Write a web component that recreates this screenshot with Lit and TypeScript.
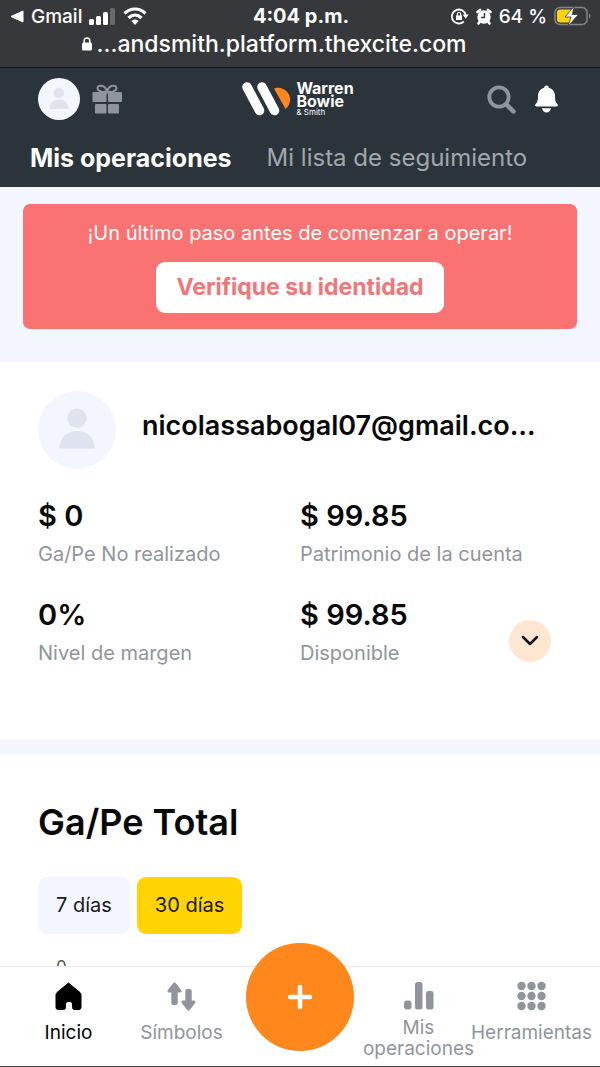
import { LitElement, html, css, svg } from "lit";
import { customElement, state } from "lit/decorators.js";

const person = svg`<circle cx="20" cy="14" r="5"/><path d="M11 29.500c0-5.500 3.500-9 9-9s9 3.500 9 9z"/>`;

@customElement("status-bar")
class StatusBar extends LitElement {
  static styles = css`
    :host { display: block; background: #37383c; color: #fff; border-bottom: 1px solid #101417; font-weight: 600; }
    .row { display: grid; grid-template-columns: 1fr auto 1fr; align-items: center; height: 32px; padding: 0 8px 0 10px; font-size: 19px; }
    .side { display: flex; align-items: center; gap: 7px; font-weight: 500; white-space: nowrap; }
    .end { justify-content: flex-end; }
    .clock { font-size: 20px; font-weight: 700; }
    .url { display: flex; align-items: center; justify-content: center; gap: 5px; height: 24px; padding: 0 52px 11px 0; font-size: 23px; font-weight: 500; line-height: 24px; }
    svg { display: block; flex: none; }
  `;
  render() {
    return html`
      <div class="row">
        <div class="side">
          <svg width="14" height="13" viewBox="0 0 14 13"><path d="M13 1v11L1 6.500z" fill="#fff" stroke="#fff" stroke-linejoin="round"/></svg>
          <span>Gmail</span>
          <svg width="27" height="17" viewBox="0 0 27 17" fill="#fff"><rect x="0" y="11" width="5" height="6" rx="1.500"/><rect x="7" y="8" width="5" height="9" rx="1.500"/><rect x="14" y="4" width="5" height="13" rx="1.500"/><rect x="21" y="0" width="5" height="17" rx="1.500" opacity=".25"/></svg>
          <svg width="24" height="18" viewBox="0 0 24 18" fill="none" stroke="#fff" stroke-width="3.200"><path d="M1.500 6.500c6-6 15-6 21 0M5.500 11c4-3.800 9-3.800 13 0"/><path d="M8.300 14c2.200-2.100 5.200-2.100 7.400 0L12 18z" fill="#fff" stroke="none"/></svg>
        </div>
        <div class="clock">4:04 p.m.</div>
        <div class="side end">
          <svg width="18" height="17" viewBox="0 0 18 17" fill="none" stroke="#fff" stroke-width="1.800"><path d="M12.800 13.500A7 7 0 1 1 14.700 7"/><path d="M11.700 6.500h6l-3 4.200z" fill="#fff" stroke="none"/><rect x="5" y="7.500" width="6" height="4.500" fill="#fff" stroke="none"/><path d="M6.300 8V6.200a1.700 1.700 0 0 1 3.400 0V8" stroke-width="1.200"/></svg>
          <svg width="16" height="17" viewBox="0 0 16 17"><circle cx="8" cy="9" r="6.700" fill="#fff"/><path d="M1.500 4 4 2M14.500 4 12 2M3.500 14l-1 1.500M12.500 14l1 1.500" stroke="#fff" stroke-width="2.600" stroke-linecap="round"/><path d="M8.500 5v4.500H5" fill="none" stroke="#37383c" stroke-width="1.400"/></svg>
          <span>64 %</span>
          <svg width="38" height="20" viewBox="0 0 38 20"><rect x="1" y="1.500" width="32" height="17" rx="5" fill="none" stroke="#85868a" stroke-width="1.500"/><rect x="3" y="3.500" width="16" height="13" rx="3" fill="#fcd20c"/><path d="M35 7.500c2 .7 2 4.300 0 5z" fill="#85868a"/><path d="M20.500 0 11 11h6l-3 9 10.500-11.500H18z" fill="#fff" stroke="#37383c" stroke-width=".8"/></svg>
        </div>
      </div>
      <div class="url">
        <svg width="10" height="14" viewBox="0 0 10 14"><rect y="5.500" width="10" height="8" rx="1.500" fill="#fff"/><path d="M2.200 6V3.700a2.800 2.800 0 0 1 5.600 0V6" fill="none" stroke="#fff" stroke-width="1.500"/></svg>
        <span>...andsmith.platform.thexcite.com</span>
      </div>`;
  }
}

@customElement("app-header")
class AppHeader extends LitElement {
  static styles = css`
    :host { display: block; background: #2a343a; color: #fff; }
    .top { display: grid; grid-template-columns: 1fr auto 1fr; align-items: center; padding: 9px 42px 0 38px; height: 44px; }
    .group { display: flex; align-items: center; gap: 12px; }
    .end { justify-content: flex-end; gap: 19px; }
    button { background: none; border: 0; padding: 0; cursor: pointer; }
    svg { display: block; }
    .logo { display: flex; align-items: center; gap: 5px; color: #fff; text-decoration: none; }
    .name { display: flex; flex-direction: column; font-size: 16px; line-height: 13px; font-weight: 700; }
    .name small { font-size: 8px; line-height: 9px; font-weight: 400; }
    .tabs { display: flex; align-items: center; gap: 35px; padding: 8px 30px 0; height: 58px; }
    .tabs a { color: #a2a7ad; font-size: 24px; line-height: 32px; text-decoration: none; white-space: nowrap; }
    .tabs a.active { color: #fff; font-size: 25px; font-weight: 700; }
  `;
  render() {
    return html`
      <div class="top">
        <div class="group">
          <button aria-label="Perfil"><svg width="42" height="42" viewBox="0 0 40 40"><circle cx="20" cy="20" r="20" fill="#f3f6ff"/><g fill="#e0e3ee">${person}</g></svg></button>
          <button aria-label="Regalos"><svg width="30" height="30" viewBox="0 0 30 30" fill="#90959b"><rect x=".5" y="8" width="14" height="10" rx="1"/><rect x="16" y="8" width="14" height="10" rx="1"/><rect x="3" y="20" width="11.500" height="9.500" rx="1"/><rect x="16" y="20" width="11" height="9.500" rx="1"/><path d="M14.500 7.500C11 9 5.500 7 5.500 4.300 5.500.5 13 .5 15 7.500 17 .5 24.500.5 24.500 4.300 24.500 7 19 9 15.500 7.500" fill="none" stroke="#90959b" stroke-width="2"/></svg></button>
        </div>
        <a class="logo" href="#">
          <svg width="49" height="34" viewBox="0 0 49 34"><path d="M32 6.500c5-1.800 11 .3 14 4.500 3.600 5.200 2.500 12-2.500 16z" fill="#ff871c"/><path d="m5 5 12.500 23.500M20 5l12.500 23.500" stroke="#fff" stroke-width="9.500" stroke-linecap="round"/></svg>
          <span class="name"><span>Warren<br>Bowie</span><small>&amp; Smith</small></span>
        </a>
        <div class="group end">
          <button aria-label="Buscar"><svg width="29" height="29" viewBox="0 0 29 29" fill="none" stroke="#90959b"><circle cx="12" cy="12" r="9.700" stroke-width="3.800"/><path d="m19.500 19.500 7 7" stroke-width="4.500" stroke-linecap="round"/></svg></button>
          <button aria-label="Notificaciones"><svg width="23" height="28" viewBox="0 0 23 28" fill="#fff"><path d="M11.500.500c1.300 0 2.200.9 2.300 2.200 4 1.100 6.200 4.200 6.200 8.300 0 4.800.8 6.500 2.500 8.300.9 1 .3 2.200-.9 2.200H1.400c-1.200 0-1.800-1.200-.9-2.200C2.200 17.500 3 15.800 3 11c0-4.100 2.200-7.200 6.200-8.300.1-1.300 1-2.200 2.300-2.200zM7 23.300h9c-.4 2.600-2.200 4.200-4.500 4.200S7.400 25.900 7 23.300z"/></svg></button>
        </div>
      </div>
      <nav class="tabs"><a class="active" href="#">Mis operaciones</a><a href="#">Mi lista de seguimiento</a></nav>`;
  }
}

@customElement("bottom-nav")
class BottomNav extends LitElement {
  static styles = css`
    :host { display: block; background: #fff; border-top: 1px solid #e8e9eb; border-bottom: 1px solid #4a4b4e; }
    nav { display: grid; grid-template-columns: minmax(0, 1fr) minmax(0, 1fr) 124px minmax(0, 1fr) minmax(0, 1fr); height: 99px; padding: 0 12px; }
    a { display: flex; flex-direction: column; align-items: center; gap: 6px; padding-top: 14px; color: #90959b; text-decoration: none; font-size: 19px; }
    a.active { color: #000; }
    .label { display: flex; align-items: center; min-height: 30px; line-height: 21px; text-align: center; }
    svg { display: block; flex: none; }
    .slot { position: relative; }
    .add { position: absolute; left: 50%; top: -24px; width: 108px; height: 108px; margin-left: -54px; padding: 0; border: 0; border-radius: 50%; background: #ff871c; display: grid; place-items: center; cursor: pointer; }
  `;
  render() {
    return html`<nav>
      <a class="active" href="#"><svg width="30" height="30" viewBox="0 0 30 30"><path d="M14.500 2 26 11.500q1 1 1 2.500v12.500q0 2-2 2h-4.500q-2 0-2-2V23c0-3.500-7-3.500-7 0v3.500q0 2-2 2H4q-2 0-2-2V14q0-1.500 1-2.500z" stroke="#000" stroke-linejoin="round"/></svg><span class="label">Inicio</span></a>
      <a href="#"><svg width="30" height="30" viewBox="0 0 30 30" fill="#90959b"><g stroke="#90959b" stroke-width="3" stroke-linejoin="round"><path d="M2 10h11L7.500 3z"/><path d="M16 21h11l-5.500 7z"/></g><rect x="4.300" y="6" width="6.400" height="18" rx="2"/><rect x="18.300" y="8" width="6.400" height="16" rx="2"/></svg><span class="label">Símbolos</span></a>
      <div class="slot"><button class="add" aria-label="Nueva operación"><svg width="24" height="24" viewBox="0 0 24 24"><path d="M12 2v20M2 12h20" stroke="#fff" stroke-width="4.500" stroke-linecap="round"/></svg></button></div>
      <a href="#"><svg width="30" height="30" viewBox="0 0 30 30" fill="#90959b"><rect x="0" y="19.500" width="7.500" height="9" rx="3"/><rect x="11" y="1" width="7.500" height="27.500" rx="2.500"/><rect x="22" y="10" width="7.500" height="18.500" rx="2.500"/></svg><span class="label">Mis<br>operaciones</span></a>
      <a href="#"><svg width="30" height="30" viewBox="0 0 30 30" fill="#90959b">${[5, 15, 25].map((y) => [4.5, 14.5, 24.5].map((x) => svg`<circle cx=${x} cy=${y} r="4.200"/>`))}</svg><span class="label">Herramientas</span></a>
    </nav>`;
  }
}

@customElement("app-root")
class AppRoot extends LitElement {
  static styles = css`
    :host { display: flex; flex-direction: column; height: 100vh; background: #fff; color: #080808; font-family: Inter, "Liberation Sans", sans-serif; }
    status-bar, app-header, bottom-nav { flex: none; }
    bottom-nav { position: relative; }
    button { font-family: inherit; border: 0; cursor: pointer; }
    main { flex: 1; min-height: 0; overflow: hidden; }
    .notice { background: #f3f6ff; padding: 17px 23px 33px; }
    .alert { display: flex; flex-direction: column; align-items: center; gap: 15px; padding: 15px 16px 16px; border-radius: 7px; background: #fb7273; color: #fff; text-align: center; }
    .alert p { margin: 0; font-size: 20px; line-height: 28px; }
    .verify { padding: 11px 20px 12px; min-width: 288px; border-radius: 9px; background: #fff; color: #f27578; font-size: 23px; line-height: 28px; font-weight: 700; }
    .account { padding: 29px 38px 72px; border-bottom: 15px solid #f3f6ff; }
    .user { display: flex; align-items: center; gap: 26px; }
    .user svg { display: block; flex: none; }
    .user h1 { margin: 0; padding: 0 0 8px; font-size: 27px; line-height: 34px; font-weight: 600; white-space: nowrap; }
    .stats { display: grid; grid-template-columns: 1fr 1fr; margin: 29px 0 0; row-gap: 29px; }
    .stat { display: flex; flex-direction: column; gap: 6px; }
    .stat dd { margin: 0; order: -1; font-size: 29px; line-height: 36px; font-weight: 600; }
    .stat dt { font-size: 20px; line-height: 28px; color: #90959b; white-space: nowrap; }
    .last { display: flex; justify-content: space-between; align-items: flex-end; padding-right: 11px; }
    .toggle { width: 42px; height: 42px; margin-bottom: 5px; padding: 0; border-radius: 50%; background: #ffe6d1; display: grid; place-items: center; }
    .total { padding: 46px 38px 0; }
    .total h2 { margin: 0 0 32px; font-size: 36px; line-height: 45px; font-weight: 600; }
    .range { display: flex; gap: 7px; }
    .range button { padding: 14px 18px 15px; border-radius: 9px; background: #f3f6ff; color: #181818; font-size: 20px; line-height: 28px; }
    .range button.on { background: #ffd400; }
    .axis { padding: 23px 18px 24px; font-size: 17px; line-height: 20px; color: #555; }
  `;
  @state() private range = "30 días";
  private stat(label: string, value: string) {
    return html`<div class="stat"><dt>${label}</dt><dd>${value}</dd></div>`;
  }
  render() {
    return html`
      <status-bar></status-bar>
      <app-header></app-header>
      <main>
        <section class="notice"><div class="alert"><p>¡Un último paso antes de comenzar a operar!</p><button class="verify">Verifique su identidad</button></div></section>
        <section class="account">
          <div class="user"><svg width="78" height="78" viewBox="0 0 40 40"><circle cx="20" cy="20" r="20" fill="#f3f6ff"/><g fill="#dfe3ef">${person}</g></svg><h1>nicolassabogal07@gmail.co…</h1></div>
          <dl class="stats">
            ${this.stat("Ga/Pe No realizado", "$ 0")}
            ${this.stat("Patrimonio de la cuenta", "$ 99.85")}
            ${this.stat("Nivel de margen", "0%")}
            <div class="last">${this.stat("Disponible", "$ 99.85")}<button class="toggle" aria-label="Ver más"><svg width="18" height="12" viewBox="0 0 18 12"><path d="m2 2 7 7 7-7" fill="none" stroke="#111" stroke-width="2.500" stroke-linecap="round" stroke-linejoin="round"/></svg></button></div>
          </dl>
        </section>
        <section class="total">
          <h2>Ga/Pe Total</h2>
          <div class="range">${["7 días", "30 días"].map((r) => html`<button class=${r === this.range ? "on" : ""} @click=${() => (this.range = r)}>${r}</button>`)}</div>
          <div class="axis">0</div>
        </section>
      </main>
      <bottom-nav></bottom-nav>`;
  }
}
